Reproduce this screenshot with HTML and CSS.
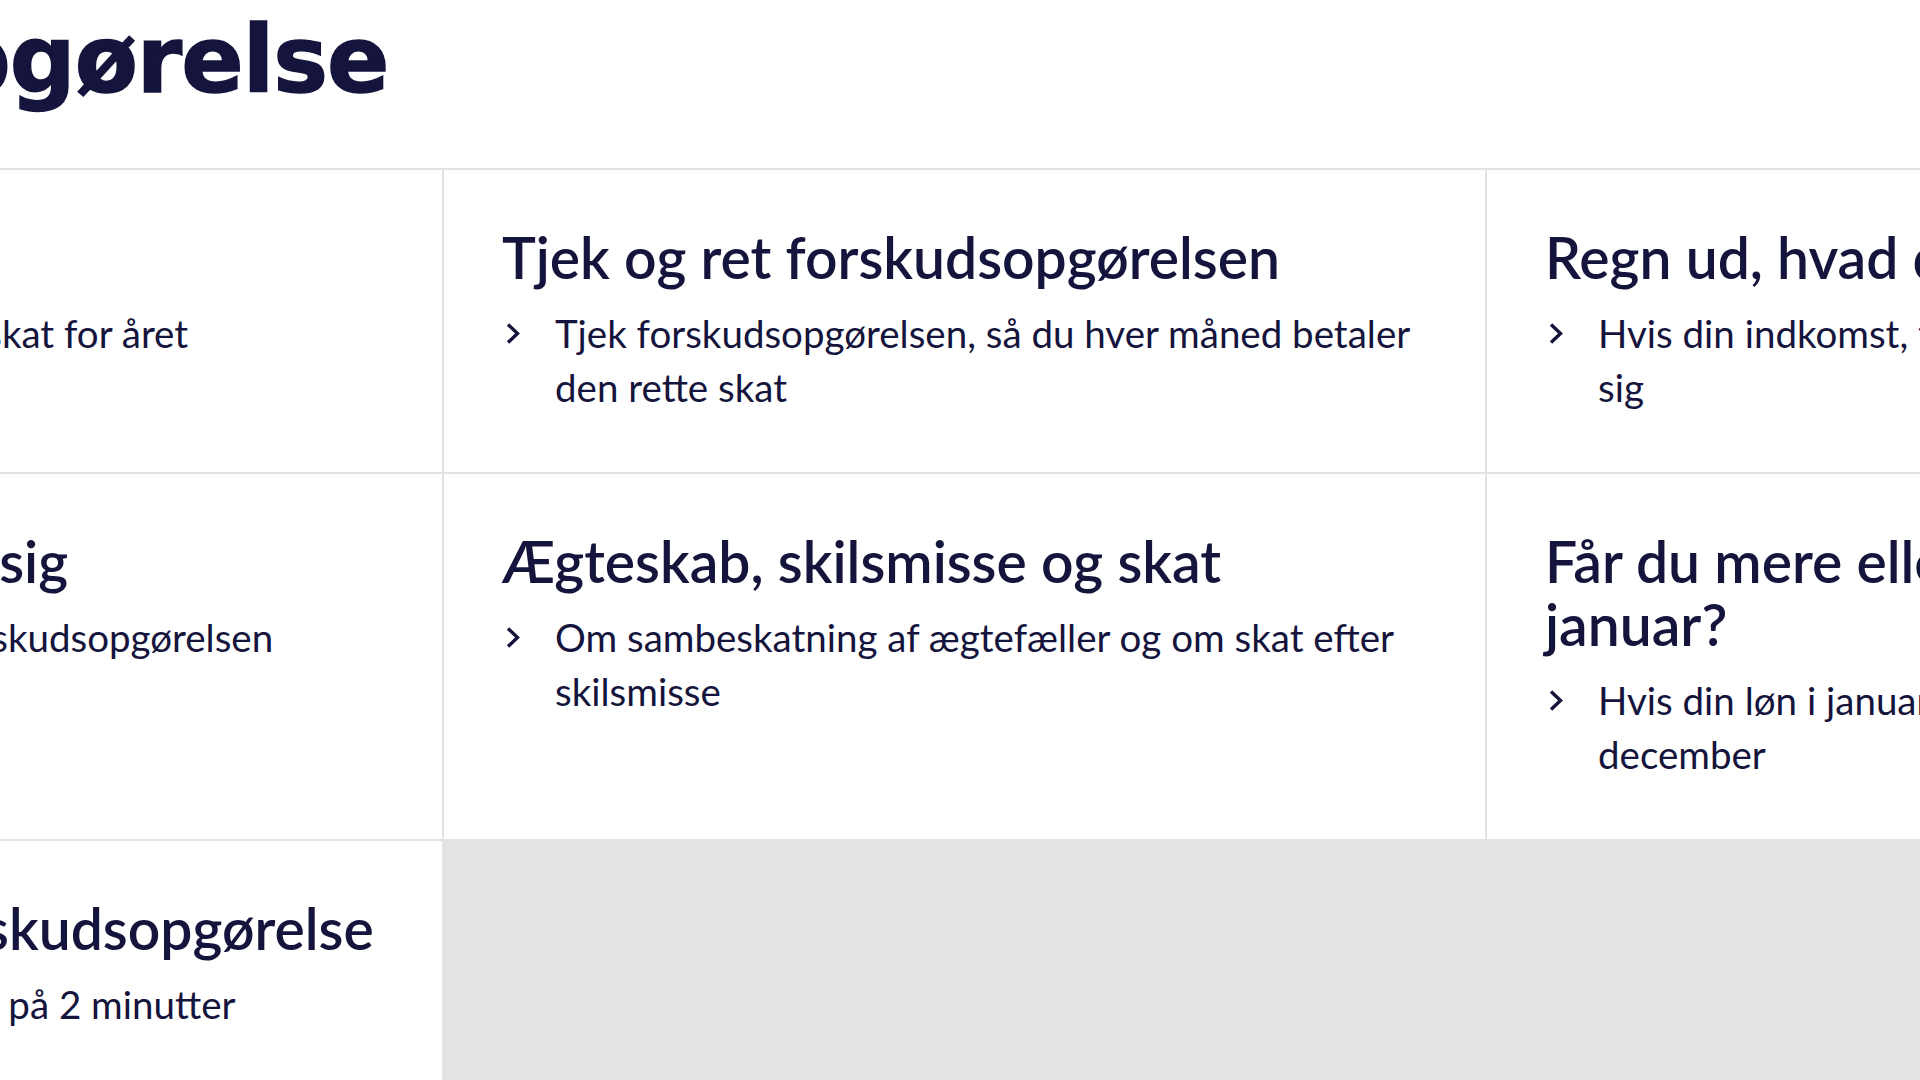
FILE: index.html
```html
<!DOCTYPE html>
<html lang="da">
<head>
    <meta charset="UTF-8">
    <meta name="viewport" content="width=device-width, initial-scale=1.0">
    <title>Forskudsopgørelse</title>
    <link rel="stylesheet" href="styles.css">
</head>
<body>
    <main class="page">
        <h1 class="page-title">Forskudsopgørelse</h1>

        <div class="topic-grid">
            <a class="topic" href="#">
                <h2 class="topic-title">Se din skat 2025</h2>
                <p class="topic-link">
                    <span class="chevron"><svg width="18" height="25" viewBox="0 0 18 25"><path d="M4 3.5 L13.5 12.5 L4 21.5" fill="none" stroke="currentColor" stroke-width="3.4"/></svg></span>
                    <span>Se hvad du skal betale i alt i skat for året</span>
                </p>
            </a>
            <a class="topic" href="#">
                <h2 class="topic-title">Tjek og ret forskudsopgørelsen</h2>
                <p class="topic-link">
                    <span class="chevron"><svg width="18" height="25" viewBox="0 0 18 25"><path d="M4 3.5 L13.5 12.5 L4 21.5" fill="none" stroke="currentColor" stroke-width="3.4"/></svg></span>
                    <span>Tjek forskudsopgørelsen, så du hver måned betaler den rette skat</span>
                </p>
            </a>
            <a class="topic" href="#">
                <h2 class="topic-title">Regn ud, hvad du skal betale</h2>
                <p class="topic-link">
                    <span class="chevron"><svg width="18" height="25" viewBox="0 0 18 25"><path d="M4 3.5 L13.5 12.5 L4 21.5" fill="none" stroke="currentColor" stroke-width="3.4"/></svg></span>
                    <span>Hvis din indkomst, trækprocent eller fradrag ændrer sig</span>
                </p>
            </a>

            <a class="topic" href="#">
                <h2 class="topic-title">Når din løn forandrer sig</h2>
                <p class="topic-link">
                    <span class="chevron"><svg width="18" height="25" viewBox="0 0 18 25"><path d="M4 3.5 L13.5 12.5 L4 21.5" fill="none" stroke="currentColor" stroke-width="3.4"/></svg></span>
                    <span>Forhold, som kan påvirke forskudsopgørelsen</span>
                </p>
            </a>
            <a class="topic" href="#">
                <h2 class="topic-title">Ægteskab, skilsmisse og skat</h2>
                <p class="topic-link">
                    <span class="chevron"><svg width="18" height="25" viewBox="0 0 18 25"><path d="M4 3.5 L13.5 12.5 L4 21.5" fill="none" stroke="currentColor" stroke-width="3.4"/></svg></span>
                    <span>Om sambeskatning af ægtefæller og om skat efter skilsmisse</span>
                </p>
            </a>
            <a class="topic" href="#">
                <h2 class="topic-title">Får du mere eller mindre i løn i januar?</h2>
                <p class="topic-link">
                    <span class="chevron"><svg width="18" height="25" viewBox="0 0 18 25"><path d="M4 3.5 L13.5 12.5 L4 21.5" fill="none" stroke="currentColor" stroke-width="3.4"/></svg></span>
                    <span>Hvis din løn i januar er højere eller lavere end i december</span>
                </p>
            </a>

            <a class="topic" href="#">
                <h2 class="topic-title">Tjek og forstå din forskudsopgørelse</h2>
                <p class="topic-link">
                    <span class="chevron"><svg width="18" height="25" viewBox="0 0 18 25"><path d="M4 3.5 L13.5 12.5 L4 21.5" fill="none" stroke="currentColor" stroke-width="3.4"/></svg></span>
                    <span>Forstå din forskudsopgørelse på 2 minutter</span>
                </p>
            </a>
        </div>
    </main>
</body>
</html>
```

FILE: styles.css
```css
* {
    margin: 0;
    padding: 0;
    box-sizing: border-box;
}

html, body {
    overflow: hidden;
}

body {
    font-family: Lato, "Noto Sans", sans-serif;
    color: #14143c;
    background: white;
}

/* the page is shown zoomed in and scrolled sideways */
.page {
    margin-left: -599px;
    width: 3127px;
}

.page-title {
    font-family: "DejaVu Sans", sans-serif;
    font-size: 92px;
    font-weight: 700;
    line-height: 1.1;
    letter-spacing: -1px;
    -webkit-text-stroke: 1.5px currentColor;
    padding: 10px 0 0 20px;
    margin-bottom: 57px;
}

.topic-grid {
    display: grid;
    grid-template-columns: repeat(3, 1041px);
    gap: 2px;
    padding-top: 2px;
    background: #e3e3e3;
}

.topic {
    display: block;
    background: white;
    padding: 56px 58px 58px;
    color: inherit;
    text-decoration: none;
}

.topic-title {
    font-size: 57px;
    font-weight: 600;
    line-height: 63px;
    margin-bottom: 17px;
}

.topic-link {
    display: flex;
    font-size: 38.5px;
    line-height: 54px;
}

.chevron {
    flex: 0 0 53px;
    height: 54px;
    display: flex;
    align-items: center;
    padding-left: 2px;
}
```
